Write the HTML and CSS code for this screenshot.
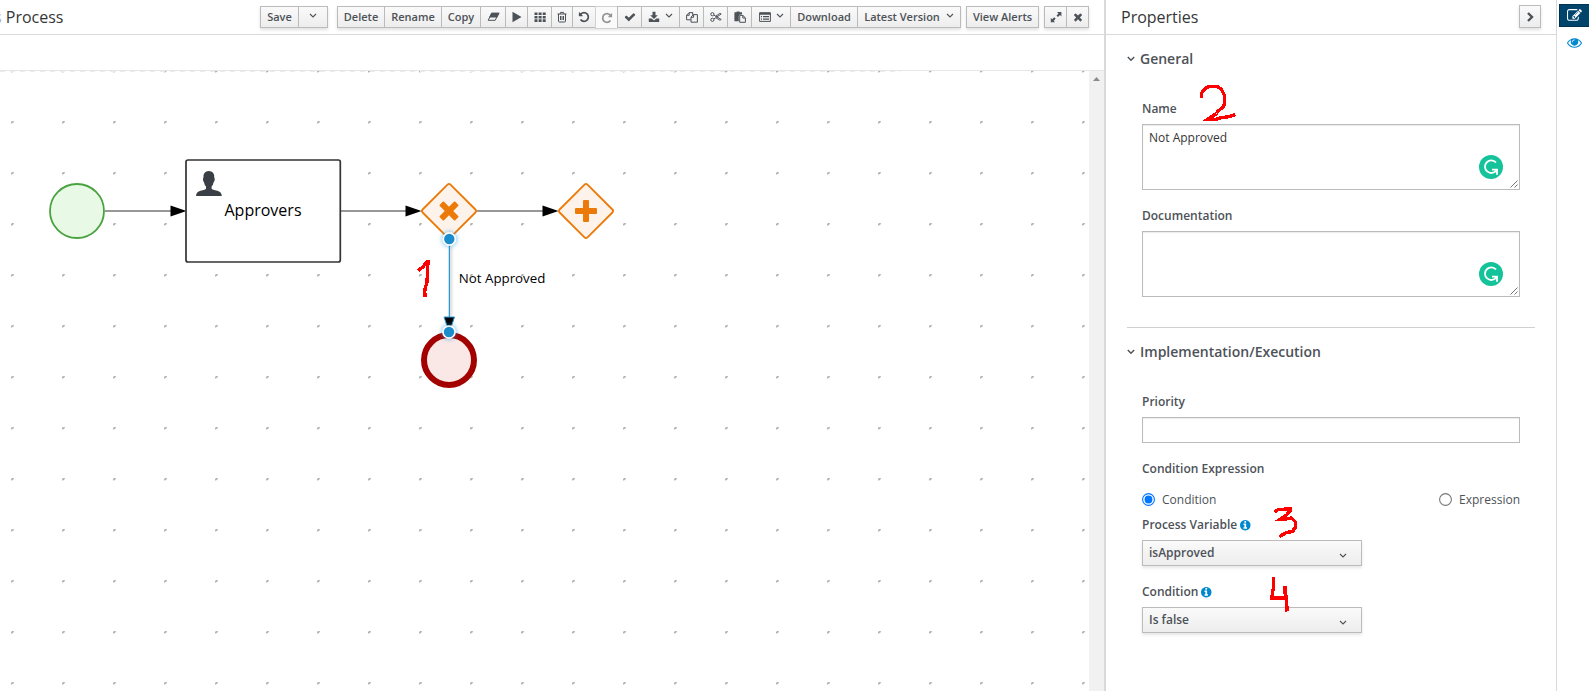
FILE: index.html
```html
<!DOCTYPE html>
<html lang="en">
<head>
<meta charset="utf-8">
<title>Process</title>
<link rel="stylesheet" href="styles.css">
</head>
<body>
<div class="app">
  <main class="editor">
    <header class="toolbar">
      <h1 class="title"><span class="cut">s</span> Process</h1>
      <div class="group">
        <button class="btn w-save">Save</button>
        <button class="btn w-caret"><svg class="caret" viewBox="0 0 8 6"><path d="M1 1l3 3 3-3"/></svg></button>
      </div>
      <div class="group g-main">
        <button class="btn w-delete">Delete</button>
        <button class="btn w-rename">Rename</button>
        <button class="btn w-copy">Copy</button>
        <button class="btn w-25"><svg class="i13" viewBox="0 0 13 10"><path d="M4.6 1.300H11.800L8.200 8.300H1.200z" fill="none" stroke="#4d5258"/><path d="M4.400.8H12.600L10.200 5.600H2.200z"/></svg></button>
        <button class="btn w-22"><svg class="i12" viewBox="0 0 12 12"><path d="M1.500.8l9 5.200-9 5.200z"/></svg></button>
        <button class="btn w-24"><svg class="i12" viewBox="0 0 12 12"><path d="M.5 1.5h3v2.6h-3zM4.600 1.500h3v2.600h-3zM8.700 1.500h3v2.600h-3zM.5 4.900h3v2.600h-3zM4.600 4.900h3v2.600h-3zM8.700 4.900h3v2.600h-3zM.5 8.300h3v2.600h-3zM4.600 8.300h3v2.600h-3zM8.700 8.300h3v2.600h-3z"/></svg></button>
        <button class="btn w-21"><svg class="i12 line" viewBox="0 0 12 12"><path d="M1.500 3h9M4 3l.5-1.600h3L8 3M2.500 3v7.200q0 .8.8.8h5.400q.8 0 .8-.8V3M4.500 5v4M6 5v4M7.500 5v4"/></svg></button>
        <button class="btn w-23"><svg class="i12" viewBox="0 0 1792 1792"><path d="M1664 896q0 156-61 298t-164 245-245 164-298 61q-172 0-327-72.500t-264-204.500q-7-10-6.500-22.500t8.500-20.500l137-138q10-9 25-9 16 2 23 12 73 95 179 147t225 52q104 0 198.500-40.500t163.500-109.500 109.500-163.500 40.500-198.500-40.500-198.500-109.500-163.500-163.500-109.500-198.500-40.500q-98 0-188 35.500t-160 101.500l137 138q31 30 14 69-17 40-59 40h-448q-26 0-45-19t-19-45v-448q0-42 40-59 39-17 69 14l130 129q107-101 244.500-156.500t284.500-55.500q156 0 298 61t245 164 164 245 61 298z"/></svg></button>
        <button class="btn w-22 off"><svg class="i12 flip" viewBox="0 0 1792 1792"><path d="M1664 896q0 156-61 298t-164 245-245 164-298 61q-172 0-327-72.500t-264-204.500q-7-10-6.500-22.500t8.500-20.500l137-138q10-9 25-9 16 2 23 12 73 95 179 147t225 52q104 0 198.500-40.500t163.500-109.500 109.500-163.500 40.500-198.500-40.500-198.500-109.500-163.500-163.500-109.500-198.500-40.500q-98 0-188 35.500t-160 101.500l137 138q31 30 14 69-17 40-59 40h-448q-26 0-45-19t-19-45v-448q0-42 40-59 39-17 69 14l130 129q107-101 244.500-156.500t284.500-55.500q156 0 298 61t245 164 164 245 61 298z"/></svg></button>
        <button class="btn w-24"><svg class="i12" viewBox="0 0 1792 1792"><path d="M1671 566q0 40-28 68l-724 724-136 136q-28 28-68 28t-68-28l-136-136-362-362q-28-28-28-68t28-68l136-136q28-28 68-28t68 28l294 295 656-657q28-28 68-28t68 28l136 136q28 28 28 68z"/></svg></button>
        <button class="btn w-38"><svg class="i12" viewBox="0 0 12 12"><path d="M4.500.7h3v3.600h2.300L6 8 2.200 4.300h2.300zM.8 7.500h2.800L6 9.400l2.400-1.900h2.800V11H.8z"/></svg><svg class="caret" viewBox="0 0 8 6"><path d="M1 1l3 3 3-3"/></svg></button>
        <button class="btn w-24"><svg class="i12 line" viewBox="0 0 12 12"><path d="M4.800 8.800H.6V4.200L3.200 1.600h3.400v2M3.200 1.700v2.600H.7M5 11.200V6.200l2.400-2.600h4v7.600zM7.600 3.700v2.600H5M6.600 3.400V1.600"/></svg></button>
        <button class="btn w-24"><svg class="i12 line" viewBox="0 0 12 12"><circle cx="2.400" cy="3.200" r="1.600"/><circle cx="2.400" cy="8.800" r="1.600"/><path d="M3.800 4l7.400 4.500-1.400.7L6 6.800M3.800 8l7.400-5-1.400-.6L5.600 5.300"/></svg></button>
        <button class="btn w-24"><svg class="i12" viewBox="0 0 12 12"><path d="M.4 1.200h2.200V.6h3v.6H8v2.400H5.800L4.800 5v5.200H.4z"/><path d="M5.700 4.400h3.200l2.500 2.400v4.500H5.700zM8.800 4.500V7h2.500" class="st"/></svg></button>
        <button class="btn w-39"><svg class="i12" viewBox="0 0 12 12"><path d="M.6 1.800h10.800v8.600H.6z" class="st"/><path d="M.6 1.400h10.800v2.400H.6zM2 5h1v1H2zM4 5h6v1H4zM2 6.700h1v.8H2zM4 6.700h6v.8H4zM2 8.300h1v.8H2zM4 8.300h6v.8H4z"/></svg><svg class="caret" viewBox="0 0 8 6"><path d="M1 1l3 3 3-3"/></svg></button>
        <button class="btn w-dl">Download</button>
        <button class="btn w-ver">Latest Version<svg class="caret" viewBox="0 0 8 6"><path d="M1 1l3 3 3-3"/></svg></button>
      </div>
      <div class="group g-alert"><button class="btn w-alert">View Alerts</button></div>
      <div class="group g-end">
        <button class="btn w-22"><svg class="i12" viewBox="0 0 12 12"><path d="M7 1h4.400v4.400L10 4 8 6 6.500 4.400l2-2zM5 11.200H.8V7L2.200 8.300l2-2L5.700 7.800l-2 2z"/></svg></button>
        <button class="btn w-23"><svg class="i12" viewBox="0 0 1792 1792"><path d="M1490 1322q0 40-28 68l-136 136q-28 28-68 28t-68-28l-294-294-294 294q-28 28-68 28t-68-28l-136-136q-28-28-28-68t28-68l294-294-294-294q-28-28-28-68t28-68l136-136q28-28 68-28t68 28l294 294 294-294q28-28 68-28t68 28l136 136q28 28 28 68t-28 68l-294 294 294 294q28 28 28 68z"/></svg></button>
      </div>
    </header>
    <div class="tabs"></div>
    <div class="stage">
      <svg class="canvas" width="1089" height="620" viewBox="0 71 1089 620">
        <defs>
          <pattern id="grid" x="11" y="70" width="51" height="51" patternUnits="userSpaceOnUse"><path d="M0 2.500V1L1 0h2l-.5 1.500L1 2.500z" fill="#b4b4b4"/></pattern>
          <filter id="glow" x="-100%" y="-100%" width="300%" height="300%"><feDropShadow dx="0" dy="0" stdDeviation="2.500" flood-color="#1e96e0" flood-opacity=".75"/></filter>
          <filter id="soft" filterUnits="userSpaceOnUse" x="440" y="240" width="24" height="90"><feGaussianBlur stdDeviation="1"/></filter>
        </defs>
        <rect y="71" width="1089" height="620" fill="url(#grid)"/>
        <path d="M0 71.500H901" stroke="#ebebeb" stroke-dasharray="5 5"/>
        <g stroke="#777" stroke-width="1.700"><path d="M105 211h68M340 211h68M477 211h68"/></g>
        <path d="M170.500 205.500L186.500 211l-16 5.500zM405.500 205.500L421.500 211l-16 5.500zM542.500 205.500L558.500 211l-16 5.500z"/>
        <circle cx="77" cy="211" r="27" fill="#e8fae6" stroke="#4aa241" stroke-width="1.800"/>
        <rect x="186" y="160" width="154.300" height="102" rx="2" fill="#fff" stroke="#333" stroke-width="1.700"/>
        <path d="M196 196q.3-4.200 4.500-5.200c3-.8 5.500-1.300 5.500-2.300v-2q-1.700-1.700-2-4.200-1.200-.8-1-3.600.1-1 .5-1.200-.4-6.400 5.300-6.500 5.800.1 5.400 6.500.5.200.5 1.200.2 2.800-1.100 3.600-.3 2.500-2 4.200v2c0 1 2.800 1.500 5.700 2.300q4.200 1 4.500 5.200z" fill="#393f44"/>
        <text x="263" y="216" class="task">Approvers</text>
        <g fill="#fef3ea" stroke="#ec7a08" stroke-width="1.800">
          <path d="M450.500 184.600L475.400 209.500q1.500 1.500 0 3L450.500 237.400q-1.500 1.500-3 0L422.600 212.500q-1.500-1.500 0-3L447.500 184.600q1.500-1.500 3 0z"/>
          <path d="M587.500 184.600L612.400 209.500q1.500 1.500 0 3L587.500 237.400q-1.500 1.500-3 0L559.600 212.500q-1.500-1.500 0-3L584.500 184.600q1.500-1.500 3 0z"/>
        </g>
        <g fill="#ec7a08">
          <path transform="rotate(45 449 211)" d="M446 201q0-1 1-1h4q1 0 1 1v7h7q1 0 1 1v4q0 1-1 1h-7v7q0 1-1 1h-4q-1 0-1-1v-7h-7q-1 0-1-1v-4q0-1 1-1h7z"/>
          <path d="M583 201q0-1 1-1h4q1 0 1 1v7h7q1 0 1 1v4q0 1-1 1h-7v7q0 1-1 1h-4q-1 0-1-1v-7h-7q-1 0-1-1v-4q0-1 1-1h7z"/>
        </g>
        <circle cx="449" cy="360" r="25" fill="#fae8e6" stroke="#a30000" stroke-width="6"/>
        <path d="M451 246v70" stroke="#000" stroke-opacity=".14" stroke-width="2.500" filter="url(#soft)"/>
        <path d="M449.400 240v78" stroke="#2b9ad6" stroke-width="1.300"/>
        <path d="M444 317h10.500l-4 12h-2.500z" stroke="#2b9ad6" stroke-width="1"/>
        <g fill="#1b8dcc" stroke="#fff" stroke-width="1.600" filter="url(#glow)"><circle cx="449.300" cy="239" r="6"/><circle cx="449" cy="332" r="6"/></g>
        <text x="458.800" y="283" class="flow">Not Approved</text>
      </svg>
      <div class="scroll"><svg width="15" height="16"><path d="M4 10L7.500 6 11 10z" fill="#8b8b8b"/></svg></div>
    </div>
  </main>
  <aside class="panel">
    <header class="phead"><h2>Properties</h2>
      <button class="btn fold"><svg class="i12" viewBox="0 0 12 12"><path d="M4 2l4 4-4 4" fill="none" stroke="#4d5258" stroke-width="2.400"/></svg></button></header>
    <section class="sec">
      <h3><svg class="chev" viewBox="0 0 8 8"><path d="M.8 2L4 5.300 7.200 2"/></svg>General</h3>
      <div class="field f-name"><label>Name</label><div class="area">Not Approved<svg class="gram" viewBox="0 0 24 24"><circle cx="12" cy="12" r="12" fill="#15c39a"/><path d="M17 7.500A6.300 6.300 0 1 0 17.300 15.500M13 14.700h5v5" fill="none" stroke="#fff" stroke-width="1.800"/></svg><svg class="grip" viewBox="0 0 8 8"><path d="M.5 7.500l7-7M4.500 7.500l3-3"/></svg></div></div>
      <div class="field f-doc"><label>Documentation</label><div class="area"><svg class="gram" viewBox="0 0 24 24"><circle cx="12" cy="12" r="12" fill="#15c39a"/><path d="M17 7.500A6.300 6.300 0 1 0 17.300 15.500M13 14.700h5v5" fill="none" stroke="#fff" stroke-width="1.800"/></svg><svg class="grip" viewBox="0 0 8 8"><path d="M.5 7.500l7-7M4.500 7.500l3-3"/></svg></div></div>
    </section>
    <section class="sec impl">
      <h3><svg class="chev" viewBox="0 0 8 8"><path d="M.8 2L4 5.300 7.200 2"/></svg>Implementation/Execution</h3>
      <div class="field f-pri"><label>Priority</label><div class="input"></div></div>
      <div class="field f-cond"><label>Condition Expression</label>
        <div class="radios">
          <span class="radio"><svg viewBox="0 0 13 13"><circle cx="6.500" cy="6.500" r="5.900" fill="#fff" stroke="#0075ff" stroke-width="1.100"/><circle cx="6.500" cy="6.500" r="3.900" fill="#0075ff"/></svg>Condition</span>
          <span class="radio"><svg viewBox="0 0 13 13"><circle cx="6.500" cy="6.500" r="5.900" fill="#fff" stroke="#767676" stroke-width="1.100"/></svg>Expression</span>
        </div></div>
      <div class="field f-var"><label>Process Variable<svg class="info" viewBox="128 128 1536 1536"><path d="M1152 1376v-160q0-14-9-23t-23-9h-96v-512q0-14-9-23t-23-9h-320q-14 0-23 9t-9 23v160q0 14 9 23t23 9h96v320h-96q-14 0-23 9t-9 23v160q0 14 9 23t23 9h448q14 0 23-9t9-23zm-128-896v-160q0-14-9-23t-23-9h-192q-14 0-23 9t-9 23v160q0 14 9 23t23 9h192q14 0 23-9t9-23zm640 416q0 209-103 385.500t-279.500 279.500-385.500 103-385.500-103-279.500-279.500-103-385.500 103-385.500 279.500-279.500 385.500-103 385.500 103 279.500 279.500 103 385.500z"/></svg></label>
        <div class="select">isApproved<svg class="caret" viewBox="0 0 8 6"><path d="M1 1l3 3 3-3"/></svg></div></div>
      <div class="field f-is"><label>Condition<svg class="info" viewBox="128 128 1536 1536"><path d="M1152 1376v-160q0-14-9-23t-23-9h-96v-512q0-14-9-23t-23-9h-320q-14 0-23 9t-9 23v160q0 14 9 23t23 9h96v320h-96q-14 0-23 9t-9 23v160q0 14 9 23t23 9h448q14 0 23-9t9-23zm-128-896v-160q0-14-9-23t-23-9h-192q-14 0-23 9t-9 23v160q0 14 9 23t23 9h192q14 0 23-9t9-23zm640 416q0 209-103 385.500t-279.500 279.500-385.500 103-385.500-103-279.500-279.500-103-385.500 103-385.500 279.500-279.500 385.500-103 385.500 103 279.500 279.500 103 385.500z"/></svg></label>
        <div class="select">Is false<svg class="caret" viewBox="0 0 8 6"><path d="M1 1l3 3 3-3"/></svg></div></div>
    </section>
  </aside>
  <nav class="rail">
    <a class="on"><svg viewBox="0 0 1792 1792"><path d="M888 1184l116-116-152-152-116 116v56h96v96h56zm440-720q-16-16-33 1l-350 350q-17 17-1 33t33-1l350-350q17-17 1-33zm80 594v190q0 119-84.500 203.500t-203.500 84.500h-832q-119 0-203.500-84.500t-84.500-203.500v-832q0-119 84.500-203.500t203.500-84.500h832q63 0 117 25 15 7 18 23 3 17-9 29l-49 49q-14 14-32 8-23-6-45-6h-832q-66 0-113 47t-47 113v832q0 66 47 113t113 47h832q66 0 113-47t47-113v-126q0-13 9-22l64-64q15-15 35-7t20 29zm-96-738l288 288-672 672h-288v-288zm444 132l-92 92-288-288 92-92q28-28 68-28t68 28l152 152q28 28 28 68t-28 68z"/></svg></a>
    <a><svg viewBox="0 0 1792 1792"><path d="M1664 960q-152-236-381-353 61 104 61 225 0 185-131.500 316.500t-316.500 131.500-316.500-131.500-131.500-316.500q0-121 61-225-229 117-381 353 133 205 333.500 326.500t434.500 121.500 434.500-121.500 333.500-326.500zm-720-384q0-20-14-34t-34-14q-125 0-214.500 89.500t-89.500 214.500q0 20 14 34t34 14 34-14 14-34q0-86 61-147t147-61q20 0 34-14t14-34zm848 384q0 34-20 69-140 230-376.500 368.500t-499.500 138.500-499.500-139-376.500-368q-20-35-20-69t20-69q140-229 376.500-368t499.500-139 499.500 139 376.500 368q20 35 20 69z"/></svg></a>
  </nav>
</div>
<svg class="marks" viewBox="0 0 1589 691" shape-rendering="crispEdges">
  <path d="M418 270.500l5-3.500 4-5.500h1L427 282l-2 7-.5 6h2"/>
  <path d="M1201.500 98v-5l5-5.500 3-1h8l4 3 3 6v9l-2 3-5 4-1 2-9 6h8l6-2 6-.5 8-2.500"/>
  <path d="M1274.500 512l4-2.500h3l9-1v2l-4 4.500-6 4h5l6-1 4 4v5l-3 4.500-6 1-7 4"/>
  <path d="M1273.500 577v11l-1 4-.5 6h14M1285 586v7l1.500 4.500.5 14"/>
</svg>
</body>
</html>
```
FILE: styles.css
```css
* { box-sizing: border-box; }
body { margin: 0; background: #fff; color: #4d5258; font: 12px/20px "Open Sans", "Noto Sans", sans-serif; overflow: hidden; }
h1, h2, h3 { margin: 0; }
.app { display: flex; width: 1589px; height: 691px; }
.editor { width: 1104px; display: flex; flex-direction: column; }
.toolbar { height: 35px; border-bottom: 1px solid #d9d9d9; display: flex; align-items: flex-start; padding-top: 6px; }
.title { width: 260px; font-size: 16px; line-height: 22px; font-weight: 400; color: #363636; white-space: pre; }
.title .cut { margin-left: -6px; color: #aaa; }
.group { display: flex; height: 22px; box-shadow: 0 2px 3px rgba(3,3,3,.12); }
.g-main { margin-left: 9px; }
.g-alert, .g-end { margin-left: 5px; }
.btn { height: 22px; padding: 0; margin: 0; border: 1px solid #bbb; border-right-width: 0; background: linear-gradient(#fafafa, #ededed); color: #4d5258; font: 600 11px/18px "Open Sans", "Noto Sans", sans-serif; display: flex; align-items: center; justify-content: center; white-space: nowrap; flex: none; }
.btn:last-child { border-right-width: 1px; }
.btn.off { height: 23px; background: #fafafa; border-color: #d1d1d1; }
.btn.off svg { opacity: .6; }
.w-save { width: 38px; } .w-caret { width: 30px; }
.w-delete { width: 47px; } .w-rename { width: 57px; } .w-copy { width: 39px; }
.w-21 { width: 21px; } .w-22 { width: 22px; } .w-23 { width: 23px; } .w-24 { width: 24px; } .w-25 { width: 25px; }
.w-38 { width: 38px; } .w-39 { width: 39px; } .w-dl { width: 67px; } .w-ver { width: 104px; }
.w-alert { width: 73px; }
.i12 { width: 12px; height: 12px; fill: #4d5258; }
.i13 { width: 13px; height: 10px; fill: #4d5258; }
.line, .st { fill: none; stroke: #4d5258; stroke-width: 1; }
.flip { transform: scaleX(-1); }
.caret { width: 8px; height: 6px; fill: none; stroke: #4d5258; stroke-width: 1.1; }
.btn * + .caret, .w-ver .caret { margin-left: 5px; }
.btn .caret { margin-top: -2px; }
.w-ver .caret { margin-left: 6px; }
.tabs { height: 36px; border-bottom: 1px solid #e6e6e6; }
.stage { display: flex; height: 620px; }
.canvas { display: block; }
.task { font: 16px "Open Sans", sans-serif; text-anchor: middle; fill: #000; }
.flow { font: 13.3px "Open Sans", sans-serif; fill: #000; }
.scroll { width: 15px; background: #f1f1f1; }
.panel { width: 453px; border-left: 2px solid #d9d9d9; border-right: 1px solid #d9d9d9; }
.phead { height: 35px; border-bottom: 1px solid #d9d9d9; display: flex; justify-content: space-between; padding: 5px 15px 0; }
.phead h2 { font-size: 16px; line-height: 24px; font-weight: 400; color: #363636; }
.fold { width: 22px; height: 23px; border-width: 1px; box-shadow: 0 2px 3px rgba(3,3,3,.12); }
.sec { margin: 0 21px 0 21px; padding-top: 14px; height: 292px; }
.sec h3 { font-size: 14px; line-height: 20px; font-weight: 600; display: flex; align-items: center; }
.impl { border-top: 1px solid #d1d1d1; height: 364px; padding-top: 14px; }
.chev { width: 8px; height: 8px; margin-right: 5px; fill: none; stroke: #4d5258; stroke-width: 1.4; }
.field { margin: 0 15px; }
.field label { display: flex; align-items: center; height: 20px; font-weight: 600; }
.f-name { margin-top: 30px; }
.f-name .area, .f-doc .area { margin-top: 5px; }
.f-doc { margin-top: 16px; }
.area { position: relative; height: 66px; border: 1px solid #bbb; padding: 3px 6px; color: #363636; box-shadow: inset 0 1px 1px rgba(3,3,3,.08); }
.gram { position: absolute; right: 16px; bottom: 10px; width: 24px; height: 24px; }
.grip { position: absolute; right: 1px; bottom: 1px; width: 8px; height: 8px; stroke: #555; stroke-width: .8; }
.f-pri { margin-top: 30px; }
.input { margin-top: 5px; height: 26px; border: 1px solid #bbb; box-shadow: inset 0 1px 1px rgba(3,3,3,.08); }
.f-cond { margin-top: 16px; }
.radios { display: flex; justify-content: space-between; margin-top: 11px; height: 20px; }
.radio { display: flex; align-items: center; }
.radio svg { width: 13px; height: 13px; margin: -1px 7px 0 0; }
.f-var { margin-top: 5px; }
.f-is { margin-top: 16px; }
.info { width: 10.5px; height: 10.5px; margin: 1px 0 0 3px; fill: #0088ce; }
.select { margin-top: 5px; width: 220px; height: 26px; border: 1px solid #bbb; background: linear-gradient(#fafafa, #ededed); box-shadow: 0 2px 3px rgba(3,3,3,.1); padding: 2px 14px 2px 6px; font-weight: 600; display: flex; justify-content: space-between; }
.select .caret { margin-top: 10px; }
.rail { width: 32px; padding: 4px 0 0 2px; }
.rail a { display: flex; align-items: center; justify-content: center; height: 23px; margin-bottom: 4px; }
.rail svg { width: 15px; height: 15px; fill: #0088ce; }
.rail .on { background: #00436b; border: 1px solid #003351; border-right: 0; }
.rail .on svg { fill: #fff; }
.marks { position: absolute; left: 0; top: 0; width: 1589px; height: 691px; pointer-events: none; fill: none; stroke: #f00; stroke-width: 3.4; }
```
